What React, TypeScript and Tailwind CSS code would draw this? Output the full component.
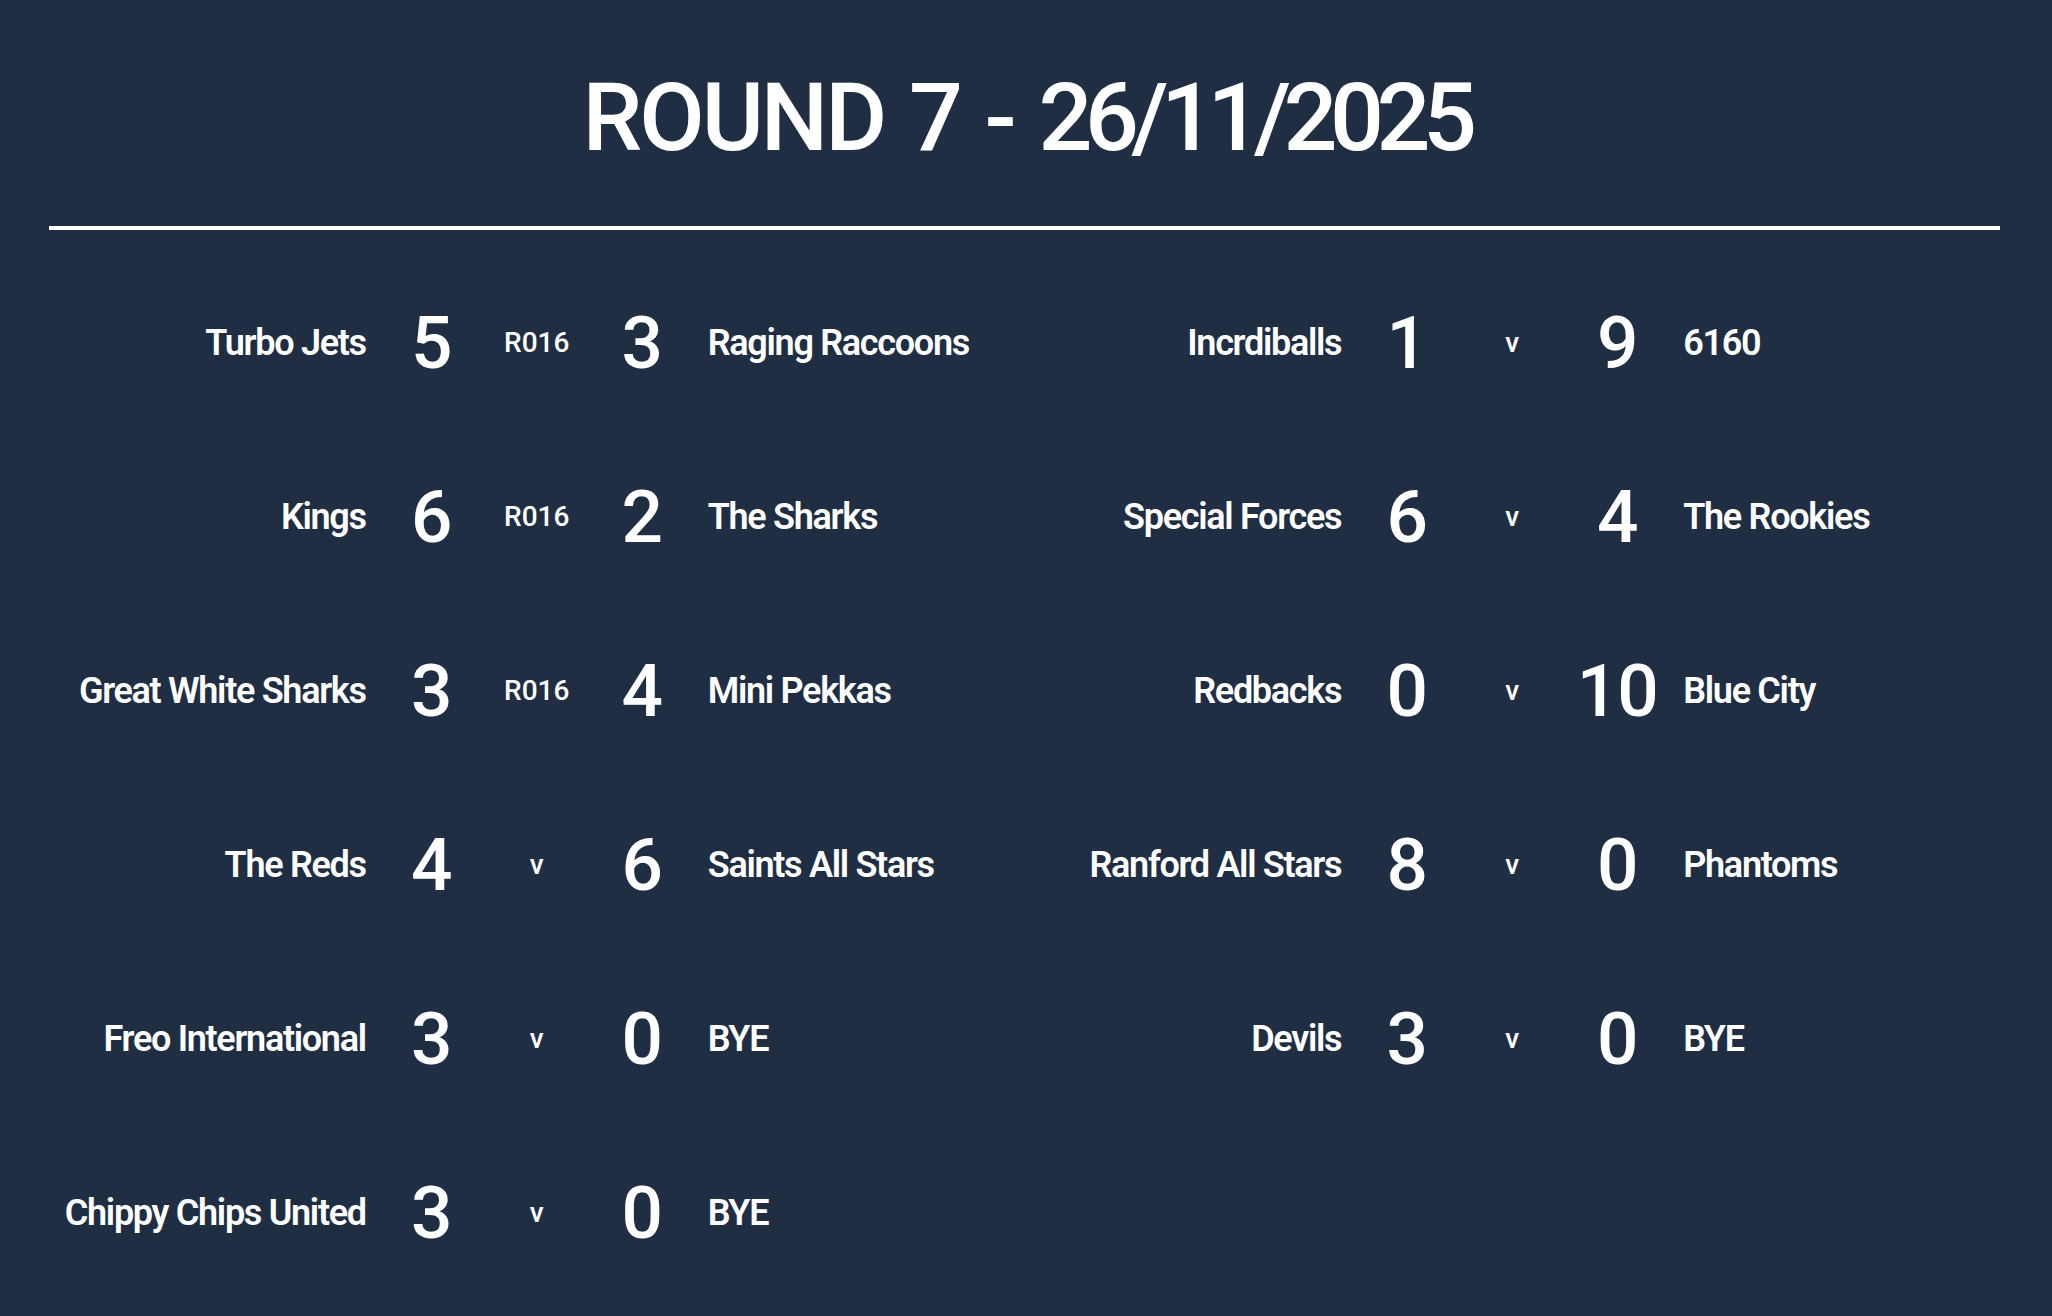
import React from "react";

type Match = { home: string; hs: string; mid: string; as: string; away: string };

const matches: Match[] = [
  { home: "Turbo Jets", hs: "5", mid: "R016", as: "3", away: "Raging Raccoons" },
  { home: "Incrdiballs", hs: "1", mid: "v", as: "9", away: "6160" },
  { home: "Kings", hs: "6", mid: "R016", as: "2", away: "The Sharks" },
  { home: "Special Forces", hs: "6", mid: "v", as: "4", away: "The Rookies" },
  { home: "Great White Sharks", hs: "3", mid: "R016", as: "4", away: "Mini Pekkas" },
  { home: "Redbacks", hs: "0", mid: "v", as: "10", away: "Blue City" },
  { home: "The Reds", hs: "4", mid: "v", as: "6", away: "Saints All Stars" },
  { home: "Ranford All Stars", hs: "8", mid: "v", as: "0", away: "Phantoms" },
  { home: "Freo International", hs: "3", mid: "v", as: "0", away: "BYE" },
  { home: "Devils", hs: "3", mid: "v", as: "0", away: "BYE" },
  { home: "Chippy Chips United", hs: "3", mid: "v", as: "0", away: "BYE" },
];

function Row({ m }: { m: Match }) {
  return (
    <div className="grid h-[174px] grid-cols-[1fr_132px_78px_132px_1fr] items-center leading-none">
      <div className="text-right text-[36px] font-semibold tracking-[-1.3px] whitespace-nowrap">{m.home}</div>
      <div className="text-center text-[73px] font-medium">{m.hs}</div>
      <div className="text-center text-[28px] font-medium">{m.mid}</div>
      <div className="text-center text-[73px] font-medium tracking-[-1px]">{m.as}</div>
      <div className="text-left text-[36px] font-semibold tracking-[-1.3px] whitespace-nowrap">{m.away}</div>
    </div>
  );
}

export default function App() {
  return (
    <div
      className="min-h-[1316px] w-full bg-[#202e44] text-white"
      style={{ fontFamily: "Roboto, 'Liberation Sans', sans-serif" }}
    >
      <h1 className="pt-[70px] text-center text-[95px] font-medium leading-none whitespace-nowrap">
        <span className="tracking-[-3px]">ROUND</span>
        <span className="tracking-[-3px] [word-spacing:4px]"> 7 - </span>
        <span className="tracking-[-7.5px]">26/11/2025</span>
      </h1>
      <div className="ml-[49px] mr-[52px] mt-[61px] h-[4px] bg-white" />
      <div className="ml-[49px] mr-[52px] mt-[26px] grid grid-cols-2">
        {matches.map((m, i) => (
          <Row key={i} m={m} />
        ))}
      </div>
    </div>
  );
}
